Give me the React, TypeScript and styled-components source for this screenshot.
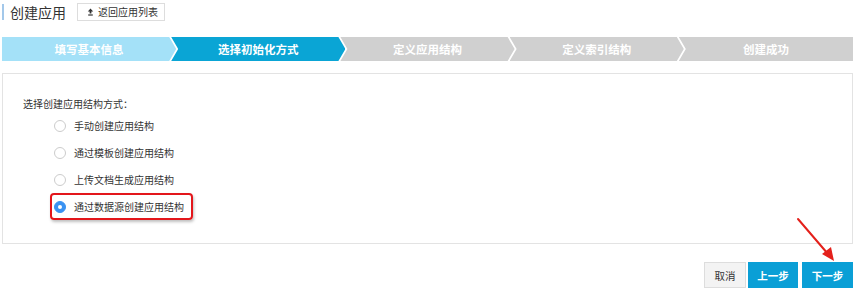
import React from 'react';
import styled, { createGlobalStyle } from 'styled-components';

const GlobalStyle = createGlobalStyle`
  html, body {
    margin: 0;
    padding: 0;
    background: #ffffff;
    font-family: "Noto Sans CJK SC", "Noto Sans", sans-serif;
    color: #333333;
  }
`;

const Page = styled.div`
  position: relative;
  width: 857px;
  height: 293px;
  padding: 0 4px 0 2px;
  box-sizing: border-box;
  overflow: hidden;
`;

const Header = styled.div`
  display: flex;
  align-items: center;
  height: 18px;
  padding-top: 3px;
`;

const Title = styled.h1`
  margin: 0;
  height: 16px;
  display: flex;
  align-items: center;
  border-left: 2px solid #a3c8ea;
  padding-left: 6px;
  font-size: 14px;
  font-weight: 400;
  color: #333333;
  line-height: 16px;
`;

const BackButton = styled.button`
  margin-left: 11px;
  height: 18px;
  display: flex;
  align-items: center;
  gap: 4px;
  padding: 0 6px 0 9px;
  border: 1px solid #dddddd;
  background: #ffffff;
  font-family: inherit;
  font-size: 10px;
  color: #333333;
  line-height: 1;
`;

const Steps = styled.div`
  display: flex;
  margin-top: 16px;
  height: 24px;
`;

const Step = styled.div<{ $state: 'done' | 'active' | 'todo'; $first?: boolean }>`
  flex: 1;
  display: flex;
  align-items: center;
  justify-content: center;
  margin-left: ${p => (p.$first ? '0' : '-5px')};
  background: ${p =>
    p.$state === 'done' ? '#a4e1f8' : p.$state === 'active' ? '#0aa5d5' : '#d0d0d0'};
  clip-path: ${p =>
    p.$first
      ? 'polygon(0 0, calc(100% - 7px) 0, 100% 50%, calc(100% - 7px) 100%, 0 100%)'
      : 'polygon(0 0, calc(100% - 7px) 0, 100% 50%, calc(100% - 7px) 100%, 0 100%, 7px 50%)'};
  color: #ffffff;
  font-size: 11.5px;
  font-weight: 700;
  &:last-child {
    clip-path: polygon(0 0, 100% 0, 100% 100%, 0 100%, 7px 50%);
  }
`;

const Panel = styled.div`
  margin-top: 12px;
  height: 171px;
  box-sizing: border-box;
  border: 1px solid #e3e3e3;
  padding: 22px 0 0 20px;
`;

const Prompt = styled.div`
  font-size: 10px;
  line-height: 16px;
  color: #333333;
`;

const Options = styled.div`
  display: flex;
  flex-direction: column;
  margin: 0 0 0 27px;
  align-items: flex-start;
`;

const Option = styled.label<{ $marked?: boolean }>`
  display: flex;
  align-items: center;
  height: 27px;
  box-sizing: border-box;
  padding: 0 7px 0 3px;
  border: 2px solid ${p => (p.$marked ? '#e3161b' : 'transparent')};
  border-radius: 4px;
  box-shadow: ${p => (p.$marked ? '1px 2px 3px rgba(0,0,0,0.25)' : 'none')};
  font-size: 10px;
  color: #333333;
`;

const Radio = styled.span<{ $checked?: boolean }>`
  width: 12px;
  height: 12px;
  box-sizing: border-box;
  border-radius: 50%;
  border: 1px solid ${p => (p.$checked ? '#3a92f2' : '#cccccc')};
  background: ${p => (p.$checked ? '#3a92f2' : '#ffffff')};
  margin: 0 8px 0 -1px;
  display: flex;
  align-items: center;
  justify-content: center;
  &::after {
    content: '';
    width: 4px;
    height: 4px;
    border-radius: 50%;
    background: #ffffff;
    display: ${p => (p.$checked ? 'block' : 'none')};
  }
`;

const Actions = styled.div`
  display: flex;
  justify-content: flex-end;
  margin-top: 18px;
  gap: 2px;
`;

const ActionButton = styled.button<{ $primary?: boolean; $w: number }>`
  width: ${p => p.$w}px;
  height: 26px;
  border: 1px solid ${p => (p.$primary ? '#0a9fd6' : '#dddddd')};
  background: ${p => (p.$primary ? '#0a9fd6' : '#f3f3f3')};
  color: ${p => (p.$primary ? '#ffffff' : '#333333')};
  font-family: inherit;
  font-size: 10.5px;
  font-weight: ${p => (p.$primary ? 700 : 400)};
  padding: 0;
  & + & + & {
    margin-left: 2px;
  }
`;

const Annotation = styled.svg`
  position: absolute;
  left: 0;
  top: 0;
  pointer-events: none;
`;

const steps = ['填写基本信息', '选择初始化方式', '定义应用结构', '定义索引结构', '创建成功'];

const options = ['手动创建应用结构', '通过模板创建应用结构', '上传文档生成应用结构', '通过数据源创建应用结构'];

export default function App() {
  return (
    <>
      <GlobalStyle />
      <Page>
        <Header>
          <Title>创建应用</Title>
          <BackButton>
            <svg width="7" height="8" viewBox="0 0 7 8">
              <path d="M3.5 0.5 L6.2 3.5 L4.4 3.5 L4.4 5.5 L2.6 5.5 L2.6 3.5 L0.8 3.5 Z" fill="#333" />
              <rect x="1.2" y="6.4" width="4.6" height="1.2" fill="#333" />
            </svg>
            返回应用列表
          </BackButton>
        </Header>
        <Steps>
          {steps.map((s, i) => (
            <Step key={s} $first={i === 0} $state={i === 0 ? 'done' : i === 1 ? 'active' : 'todo'}>
              {s}
            </Step>
          ))}
        </Steps>
        <Panel>
          <Prompt>选择创建应用结构方式：</Prompt>
          <Options>
            {options.map((o, i) => (
              <Option key={o} $marked={i === 3}>
                <Radio $checked={i === 3} />
                {o}
              </Option>
            ))}
          </Options>
        </Panel>
        <Actions>
          <ActionButton $w={42}>取消</ActionButton>
          <ActionButton $primary $w={50}>上一步</ActionButton>
          <ActionButton $primary $w={51}>下一步</ActionButton>
        </Actions>
        <Annotation width="857" height="293" viewBox="0 0 857 293">
          <line x1="798" y1="219" x2="828" y2="254" stroke="#e4201b" strokeWidth="2" strokeLinecap="round" />
          <path d="M834 261 L822 254 L831 247 Z" fill="#e4201b" />
        </Annotation>
      </Page>
    </>
  );
}
